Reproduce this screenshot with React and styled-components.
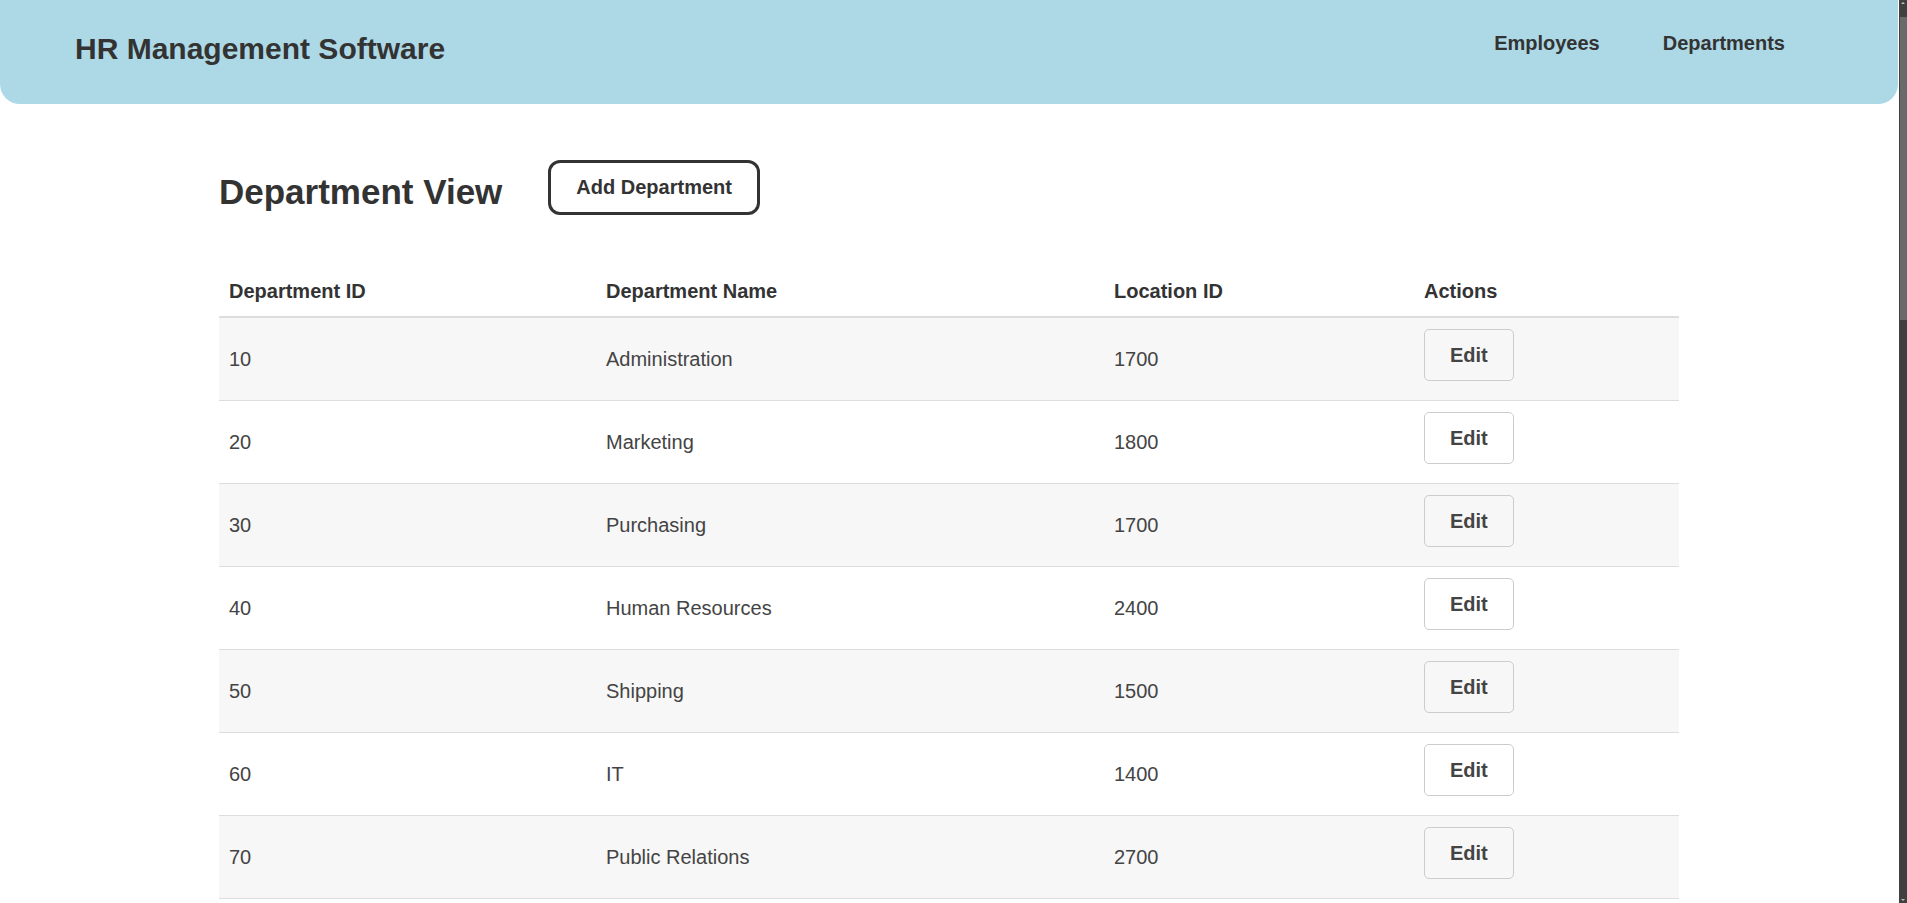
import React from "react"
import styled, { createGlobalStyle } from "styled-components"

const GlobalStyle = createGlobalStyle`
    html {
        background: #ffffff;
    }
    body {
        margin: 0 9px 0 0;
        font-family: "Liberation Sans", Arial, sans-serif;
        color: #333;
    }
`

const departments = [
    [10, "Administration", 1700],
    [20, "Marketing", 1800],
    [30, "Purchasing", 1700],
    [40, "Human Resources", 2400],
    [50, "Shipping", 1500],
    [60, "IT", 1400],
    [70, "Public Relations", 2700],
    [80, "Sales", 2500],
    [90, "Executive", 1700],
    [100, "Finance", 1700],
    [110, "Accounting", 1700],
    [120, "Treasury", 1700],
    [130, "Corporate Tax", 1700],
    [140, "Control And Credit", 1700],
    [150, "Shareholder Services", 1700],
    [160, "Benefits", 1700],
    [170, "Manufacturing", 1700],
    [180, "Construction", 1700],
    [190, "Contracting", 1700],
    [200, "Operations", 1700],
    [210, "IT Support", 1700],
    [220, "NOC", 1700],
    [230, "IT Helpdesk", 1700],
    [240, "Government Sales", 1700],
    [250, "Retail Sales", 1700],
    [260, "Recruiting", 1700],
    [270, "Payroll", 1700],
]

// window scrollbar as it shows in the screenshot (dark theme)
const ScrollTrack = styled.div`
    position: fixed;
    top: 0;
    right: 0;
    width: 8px;
    height: 100vh;
    background: #404040;
    display: flex;
    flex-direction: column;
    align-items: flex-end;
`

const ScrollArrow = styled.div`
    width: 8px;
    height: 16px;
    display: flex;
    align-items: ${(p) => (p.$down ? "flex-end" : "flex-start")};
    justify-content: center;
    padding: 2px 0;
    box-sizing: border-box;

    &::after {
        content: "";
        border-left: 2px solid transparent;
        border-right: 2px solid transparent;
        ${(p) =>
            p.$down
                ? "border-top: 2px solid #bdbdbd;"
                : "border-bottom: 2px solid #bdbdbd;"}
    }
`

const ScrollThumb = styled.div`
    width: 7px;
    height: 303px;
    margin-top: 1px;
    background: #6a6a6a;
`

const ScrollRest = styled.div`
    flex: 1;
`

const Header = styled.header`
    display: flex;
    justify-content: space-between;
    align-items: flex-start;
    box-sizing: border-box;
    height: 104px;
    padding: 31px 113px 0 75px;
    background-color: #add8e6;
    border-radius: 0 0 20px 20px;
`

const Brand = styled.h1`
    margin: 0;
    font-size: 30px;
    line-height: 35px;
    font-weight: bold;
    color: #333;
`

const Nav = styled.nav`
    display: flex;
    gap: 63px;
    padding-top: 1px;
`

const NavLink = styled.a`
    font-size: 20px;
    line-height: 23px;
    font-weight: bold;
    color: #333;
    text-decoration: none;
    cursor: pointer;
`

const Main = styled.main`
    width: 1460px;
    margin: 0 auto;
    padding-bottom: 40px;
`

const TopBar = styled.div`
    display: flex;
    align-items: flex-start;
    gap: 46px;
    padding-top: 56px;
    margin-bottom: 52px;
`

const Title = styled.h2`
    margin: 12px 0 0;
    font-size: 35px;
    line-height: 40px;
    font-weight: bold;
    color: #333;
`

const AddButton = styled.button`
    padding: 13px 25px;
    font-family: inherit;
    font-size: 20px;
    line-height: 23px;
    font-weight: bold;
    color: #333;
    background: #fff;
    border: 3px solid #333;
    border-radius: 12px;
    cursor: pointer;
`

const Table = styled.table`
    width: 100%;
    border-collapse: collapse;
    table-layout: fixed;
`

const Th = styled.th`
    padding: 13px 10px;
    text-align: left;
    font-size: 20px;
    line-height: 23px;
    font-weight: bold;
    color: #333;
    border-bottom: 2px solid #ddd;
`

const Row = styled.tr`
    background-color: ${(p) => (p.$striped ? "#f7f7f7" : "#fff")};
`

const Td = styled.td`
    padding: 10px;
    font-size: 20px;
    line-height: 23px;
    color: #444;
    vertical-align: middle;
    border-bottom: 1px solid #ddd;
`

const EditButton = styled.button`
    display: block;
    margin: 1px 0 9px;
    padding: 13.5px 25px;
    font-family: inherit;
    font-size: 20px;
    line-height: 23px;
    font-weight: bold;
    color: #444;
    background: transparent;
    border: 1px solid #ccc;
    border-radius: 5px;
    cursor: pointer;
`

const App = () => {
    return (
        <>
            <GlobalStyle />
            <Header>
                <Brand>HR Management Software</Brand>
                <Nav>
                    <NavLink>Employees</NavLink>
                    <NavLink>Departments</NavLink>
                </Nav>
            </Header>
            <Main>
                <TopBar>
                    <Title>Department View</Title>
                    <AddButton>Add Department</AddButton>
                </TopBar>
                <Table>
                    <colgroup>
                        <col style={{ width: "377px" }} />
                        <col style={{ width: "508px" }} />
                        <col style={{ width: "310px" }} />
                        <col />
                    </colgroup>
                    <thead>
                        <tr>
                            <Th>Department ID</Th>
                            <Th>Department Name</Th>
                            <Th>Location ID</Th>
                            <Th>Actions</Th>
                        </tr>
                    </thead>
                    <tbody>
                        {departments.map(([id, name, location], i) => (
                            <Row key={id} $striped={i % 2 === 0}>
                                <Td>{id}</Td>
                                <Td>{name}</Td>
                                <Td>{location}</Td>
                                <Td>
                                    <EditButton>Edit</EditButton>
                                </Td>
                            </Row>
                        ))}
                    </tbody>
                </Table>
            </Main>
            <ScrollTrack>
                <ScrollArrow />
                <ScrollThumb />
                <ScrollRest />
                <ScrollArrow $down />
            </ScrollTrack>
        </>
    )
}

export default App
